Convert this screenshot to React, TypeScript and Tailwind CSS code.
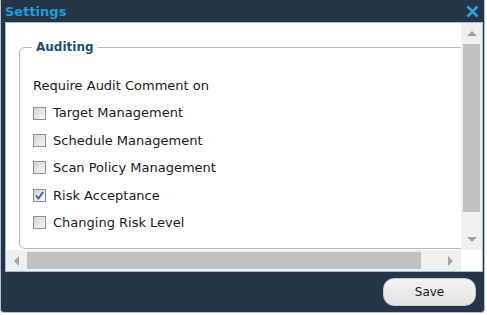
import React from 'react';

const items = [
  { label: 'Target Management', checked: false },
  { label: 'Schedule Management', checked: false },
  { label: 'Scan Policy Management', checked: false },
  { label: 'Risk Acceptance', checked: true },
  { label: 'Changing Risk Level', checked: false },
];

const Checkbox = ({ checked }: { checked: boolean }) => (
  <span className="relative inline-block w-[13px] h-[13px] shrink-0 border border-[#8f8f8f] bg-gradient-to-br from-[#d4d4d4] to-[#f7f7f7]">
    {checked && (
      <svg className="absolute left-[1px] top-[1px]" width="9" height="9" viewBox="0 0 9 9">
        <path d="M1 4.5 L3.5 7.5 L8 1" fill="none" stroke="#3e5ca8" strokeWidth="1.8" />
      </svg>
    )}
  </span>
);

const Arrow = ({ dir }: { dir: 'up' | 'down' | 'left' | 'right' }) => {
  const pts = {
    up: '0,5 5,0 10,5',
    down: '0,0 10,0 5,5',
    left: '5,0 5,10 0,5',
    right: '0,0 0,10 5,5',
  }[dir];
  const vertical = dir === 'up' || dir === 'down';
  return (
    <svg width={vertical ? 10 : 5} height={vertical ? 5 : 10}>
      <polygon points={pts} fill="#a3a3a3" />
    </svg>
  );
};

export default function App() {
  return (
    <div className="w-[487px] h-[315px] bg-white overflow-hidden" style={{ fontFamily: '"DejaVu Sans", sans-serif' }}>
      <div className="w-[485px] h-[313px] bg-[#243547] border-x border-b border-[#b8c2cc] rounded-b-[4px] flex flex-col">
        {/* title bar */}
        <div className="h-[22px] flex items-center justify-between pl-[4px] pr-[5px]">
          <span className="text-[13px] font-bold text-[#1d9fdd] leading-none">Settings</span>
          <svg width="13" height="13" viewBox="0 0 13 13">
            <path d="M1.5 1.5 L11.5 11.5 M11.5 1.5 L1.5 11.5" stroke="#2ba2de" strokeWidth="2.6" />
          </svg>
        </div>

        {/* content panel */}
        <div className="ml-[4px] w-[478px] h-[250px] border border-[#a9bdd8] bg-white flex flex-col">
          <div className="flex flex-1 min-h-0">
            <div className="flex-1 overflow-hidden pl-[13px] pt-[16px]">
              <fieldset className="w-[520px] border border-[#b7b7c7] rounded-[6px] pl-[12px] pb-[12px]">
                <legend className="px-[4px] text-[12px] font-bold text-[#1b5070] leading-[16px]">Auditing</legend>
                <div className="pt-[17px] text-[13px] text-[#1a1a1a]">
                  <div className="h-[27.4px] flex items-center pl-[1px]">Require Audit Comment on</div>
                  {items.map((it) => (
                    <div key={it.label} className="h-[27.4px] flex items-center gap-[7px] pl-[1px]">
                      <Checkbox checked={it.checked} />
                      <span>{it.label}</span>
                    </div>
                  ))}
                </div>
              </fieldset>
            </div>
            {/* vertical scrollbar */}
            <div className="w-[21px] bg-[#f0f0f0] flex flex-col items-center">
              <div className="h-[21px] flex items-center justify-center">
                <Arrow dir="up" />
              </div>
              <div className="w-[17px] h-[168px] bg-[#c1c1c1]" />
              <div className="flex-1" />
              <div className="h-[21px] flex items-center justify-center">
                <Arrow dir="down" />
              </div>
            </div>
          </div>
          {/* horizontal scrollbar */}
          <div className="h-[21px] flex">
            <div className="flex-1 bg-[#f0f0f0] flex items-center">
              <div className="w-[21px] flex justify-center">
                <Arrow dir="left" />
              </div>
              <div className="w-[394px] h-[17px] bg-[#c1c1c1]" />
              <div className="flex-1" />
              <div className="w-[21px] flex justify-center">
                <Arrow dir="right" />
              </div>
            </div>
            <div className="w-[21px] bg-white" />
          </div>
        </div>

        {/* footer */}
        <div className="flex-1 flex items-center justify-end pr-[8px]">
          <button className="w-[93px] h-[28px] rounded-[11px] border border-[#c9c9c9] bg-gradient-to-b from-[#f4f4f4] to-[#e3e3e3] text-[12px] text-[#1a1a1a]">
            Save
          </button>
        </div>
      </div>
    </div>
  );
}
